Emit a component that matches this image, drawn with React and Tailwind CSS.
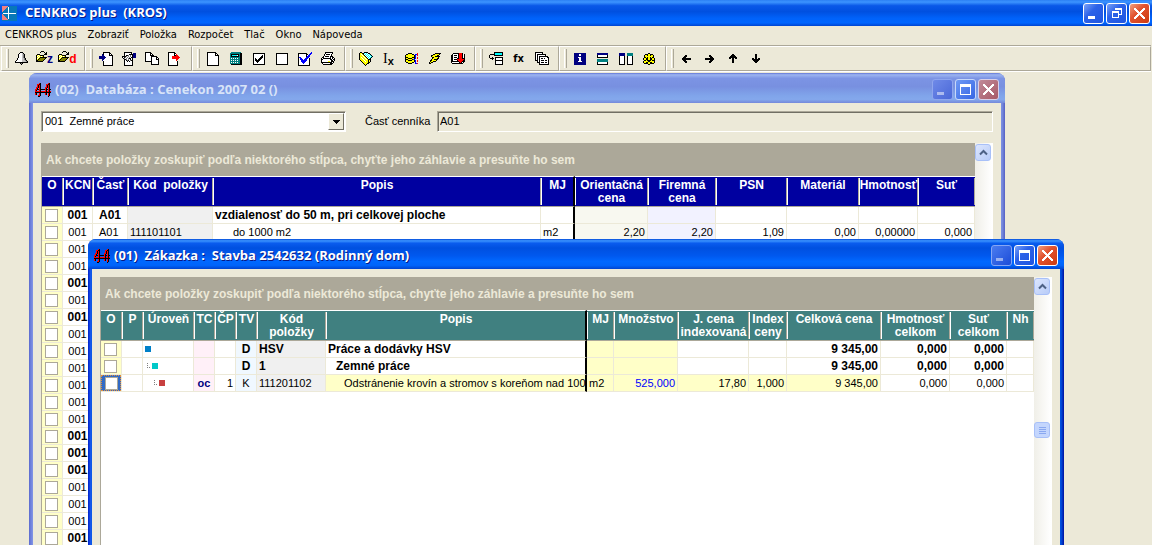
import React from 'react';

const PALETTE = {
  k: '#000000', w: '#ffffff', n: '#000080', b: '#0000ff', r: '#ff0000', d: '#a00000',
  g: '#808080', l: '#c0c0c0', t: '#008080', c: '#00ffff', y: '#ffff00', o: '#808000',
};

function Pixels({ rows, className = '' }) {
  const w = Math.max(...rows.map((r) => r.length));
  const rects = [];
  rows.forEach((row, y) => {
    let x = 0;
    while (x < row.length) {
      const ch = row[x];
      let end = x + 1;
      while (end < row.length && row[end] === ch) end += 1;
      if (PALETTE[ch]) rects.push(<rect key={`${x}-${y}`} x={x} y={y} width={end - x} height="1" fill={PALETTE[ch]} />);
      x = end;
    }
  });
  return (
    <svg width={w} height={rows.length} viewBox={`0 0 ${w} ${rows.length}`} shapeRendering="crispEdges" aria-hidden="true" className={`shrink-0 ${className}`}>
      {rects}
    </svg>
  );
}

const ART = {
  bell: [
    '.....kkk.....', '....kwwlk....', '...kwwwlgk...', '...kwwwlgk...', '...kwwwlgk...', '...kwwwlgk...', '..kwwwwllgk..',
    '..kwwwwllgk..', '.kwwwwwlllgk.', 'kwwwwwwllllgk', 'kkkkkkkkkkkkk', '.....kgk.....', '......k......',
  ],
  folder: [
    '.....kkk...', '....k...k.k', '.........kk', '.kkk....kkk', 'kywykkkk...', 'kwywywyk...', 'kywykkkkkkk', 'kwykoooook.', 'kykoooook..', 'kkoooook...', 'kkkkkkk....',
  ],
  docIn: [
    '....kkkkkkk...', '....kwwwwwkk..', '...nkwwwwwkwk.', '...nnwwwwwkkkk', 'nnnnnnwwwwwwwk', 'nnnnnnnwwwwwwk', 'nnnnnnwwwwwwwk', '...nnwwwwwwwwk', '...nwwwwwwwwwk', '....kwwwwwwwwk', '....kwwwwwwwwk', '....kwwwwwwwwk', '....kwwwwwwwwk', '....kkkkkkkkkk',
  ],
  docHand: [
    '..kkkkkkkk....', '..kwwwwwwk.nnn', '..kwwwwkkkknnn', '..kwkkgwgwknnn', 'kkkkgwgwgwknnn', 'kwkgwgwgwkknnn', '.kgwgwgkkwk...', '..kkgwgwkwk...', '..kwkgkwgkk...', '..kwwkwkwwk...', '..kwwwwwwwk...', '..kwwwwwwwk...', '..kwwwwwwwk...', '..kkkkkkkkk...',
  ],
  copy: [
    'kkkkkk........', 'kwwwwkk.......', 'kwwwwkwk......', 'kwwwwkkkk.....', 'kwwwwwkkkkkk..', 'kwwwwwkwwwwkk.', 'kwwwwwkwwwwkwk', 'kwwwwwkwwwwkkk', 'kwwwwwkwwwwwwk', 'kkkkkkkwwwwwwk', '......kwwwwwwk', '......kwwwwwwk', '......kkkkkkkk',
  ],
  docOut: [
    'kkkkkkk......', 'kwwwwwkk.....', 'kwwwwwkwr....', 'kwwwwwkkrr...', 'kwwwrrrrrrr..', 'kwwwrrrrrrrr.', 'kwwwrrrrrrr..', 'kwwwwwwwrr...', 'kwwwwwwwr....', 'kwwwwwwwwk...', 'kwwwwwwwwk...', 'kwwwwwwwwk...', 'kwwwwwwwwk...', 'kkkkkkkkkk...',
  ],
  page: [
    'kkkkkkkkk...', 'kwwwwwwwkk..', 'kwwwwwwwkwk.', 'kwwwwwwwkkkk', 'kwwwwwwwwwwk', 'kwwwwwwwwwwk', 'kwwwwwwwwwwk', 'kwwwwwwwwwwk', 'kwwwwwwwwwwk', 'kwwwwwwwwwwk', 'kwwwwwwwwwwk', 'kwwwwwwwwwwk', 'kwwwwwwwwwwk', 'kkkkkkkkkkkk',
  ],
  calc: [
    '.tttttttttt.', 'ttttttttttkk', 'tkkkkkkkktkk', 'tkcccccwktkk', 'tkkkkkkkktkk', 'ttttttttttkk', 'twtwtwtwttkk', 'ttttttttttkk', 'twtwtwtwttkk', 'ttttttttttkk', 'twtwtwtwttkk', 'ttttttttttkk', '.kkkkkkkkkkk',
  ],
  checked: [
    'kkkkkkkkkkkk', 'kwwwwwwwwwwk', 'kwwwwwwwwkwk', 'kwwwwwwwkkwk', 'kwwwwwwkkkwk', 'kwkwwwkkkwwk', 'kwkkwkkkwwwk', 'kwkkkkkwwwwk', 'kwwkkkwwwwwk', 'kwwwkwwwwwwk', 'kwwwwwwwwwwk', 'kkkkkkkkkkkk',
  ],
  unchecked: [
    'kkkkkkkkkkkk', 'kwwwwwwwwwwk', 'kwwwwwwwwwwk', 'kwwwwwwwwwwk', 'kwwwwwwwwwwk', 'kwwwwwwwwwwk', 'kwwwwwwwwwwk', 'kwwwwwwwwwwk', 'kwwwwwwwwwwk', 'kwwwwwwwwwwk', 'kwwwwwwwwwwk', 'kkkkkkkkkkkk',
  ],
  docCheck: [
    '.............b', 'kkkkkkkkk...bb', 'kwwwwwwwkk.bb.', 'kwwwwwwwkwbb..', 'kwwwwwwwkbbb..', 'kbbwwwwwbbb...', 'kwbbwwwbbbwk..', 'kwbbbwbbbwwk..', 'kwwbbbbbbwwk..', 'kwwbbbbbwwwk..', 'kwwwbbbwwwwk..', 'kwwwwbwwwwwk..', 'kwwwwwwwwwwk..', 'kkkkkkkkkkkk..',
  ],
  printer: [
    '....kkkkkkkk..', '....kwwwwwwk..', '...kwkkkkwk...', '...kwwwwwwk...', '..kwkkkkwkkk..', '.kkwwwwwwkwkk.', 'kwkkkkkkkkwkwk', 'kkwwwwwwwkkwkk', 'kwwwwwwwwwkkwk', 'kwwwwwwyywkkk.', 'kkkkkkkkkkkwk.', '.kwwwwwwwkkk..', '..kkkkkkkkk...',
  ],
  book: [
    '.kk..kkkk.....', 'kyykkcwcwkk...', 'kywykwcwcwck..', 'kyywykwcwcwck.', 'kyyywykwcwcwck', 'kywyywykwcwck.', 'kyywyywykwck..', 'kyyywyywykkk..', '.kyyywyyykyk..', '..kyyywyykyk..', '...kyyyyykk...', '....kyyykk....', '.....kyk......', '......k.......',
  ],
  coins: [
    '...kkkk.....r.', '.kkyyyykk.bbr.', 'kyyyyyyyykb.r.', 'kyyyyyyyykb...', 'kkkyyyykkkb.r.', 'kyykkkkyykb.r.', 'kkkyyyykbb....', 'kyykkkkyykb.r.', 'kyyyyyyyykb.r.', '.kkyyyykk.b...', '...kkkk...bbr.',
  ],
  bolt: [
    '......kkkkkk', '....kkyyyyk.', '..kkyyyykk..', '..kyyykkkkk.', '...kkyyyyk..', '...kyyyykk..', '..kyykkkk...', '.kkyyyyk....', '.kyykkk.....', 'kykk........', 'kk..........',
  ],
  ledger: [
    '..kkkkkkrrrk..', '.kwwwwwkrrrkwk', 'kkwkkkwkrrrkwk', 'kkwwwwwkrrrkwk', 'kkwkkkwkrrrkwk', 'kkwwwwkkrrrkkk', 'kkwkkkrrrrrrrk', 'kkwwwwkrrrrrkk', 'kkkkkkkkrrrkkk', 'kwwwwwwwkrkwk.', '.kkkkkkkkkkk..',
  ],
  insert: [
    '.....kkkkkkkkk', '.....kccccccck', '.kkkkkccccccck', 'k....kkkkkkkkk', 'k.............', 'k..k..kkkkkkkk', '.kkkk.kwwwwwwk', '...k..kwwwwwwk', '......kkkkkkkk', '......kwwwwwwk', '......kwwwwwwk', '......kwwwwwwk', '......kkkkkkkk',
  ],
  stack: [
    'kkkkkkkk......', 'kwwwwwwk......', 'kwkkkkkkkkk...', 'kwkwwwwwwwk...', 'kwkwkkkkkkkkk.', 'kwkwkwwwwwwwkk', 'kwkwkwkkwkwwwk', 'kwkwkwwwwwwwwk', 'kkkwkwkkkwkkwk', '..kwkwwwwwwwwk', '..kkkwkkkwkkwk', '....kwwwwwwwwk', '....kkkkkkkkkk',
  ],
  info: [
    'nnnnnnnnnnnn', 'nnnnnwwnnnnn', 'nnnnnwwnnnnn', 'nnnnnnnnnnnn', 'nnnnwwwnnnnn', 'nnnnnwwnnnnn', 'nnnnnwwnnnnn', 'nnnnnwwnnnnn', 'nnnnwwwwnnnn', 'nnnnnnnnnnnn', 'nnnnnnnnnnnn', 'nnnnnnnnnnnn',
  ],
  rowsSplit: [
    'nnnnnnnnnnn', 'nnnnnnnnnnn', 'kwwwwwwwwwk', 'kwwwwwwwwwk', 'kkkkkkkkkkk', '...........', 'ttttttttttt', 'ttttttttttt', 'ttttttttttt', 'kwwwwwwwwwk', 'kwwwwwwwwwk', 'kkkkkkkkkkk',
  ],
  colsSplit: [
    'nnnnnn..tttttt', 'nnnnnn..tttttt', 'nnnnnn..tttttt', 'kwwwwk..kwwwwk', 'kwwwwk..kwwwwk', 'kwwwwk..kwwwwk', 'kwwwwk..kwwwwk', 'kwwwwk..kwwwwk', 'kwwwwk..kwwwwk', 'kwwwwk..kwwwwk', 'kwwwwk..kwwwwk', 'kkkkkk..kkkkkk',
  ],
  gear: [
    '.....kk.....', '..kkkyykkk..', '.kyykyykyyk.', '.kyyyyyyyyk.', '.kkykyykykk.', 'kyykkyykkyyk', 'kyykkyykkyyk', '.kkykkkkykkk', 'kyyyykkyyyyk', 'kyykkyykkyyk', '.kkkkyykkkk.', '.....kk.....',
  ],
  left: ['...kk....', '..kkk....', '.kkk.....', 'kkkkkkkkk', 'kkkkkkkkk', '.kkk.....', '..kkk....', '...kk....'],
  right: ['....kk...', '....kkk..', '.....kkk.', 'kkkkkkkkk', 'kkkkkkkkk', '.....kkk.', '....kkk..', '....kk...'],
  up: ['...kk...', '..kkkk..', '.kkkkkk.', 'kkkkkkkk', 'kk.kk.kk', '...kk...', '...kk...', '...kk...', '...kk...'],
  down: ['...kk...', '...kk...', '...kk...', '...kk...', 'kk.kk.kk', 'kkkkkkkk', '.kkkkkk.', '..kkkk..', '...kk...'],
  tower: [
    '....rk.......rk.', '..rrkk.....rrkk.', '..rkrk.....rkrk.', '..rkrk.....rkrk.', '.rrkrk....rrkrk.', '.rk.rk....rk.rk.', 'rrkkrkkkkkrkkrkk', 'rk..rk....rk.rk.', 'rrrrrkrrrrrkrrkr', 'kkkkkkkkkkkkkkkk', 'rk..rk....rk.rk.', 'rk..rk....rk.rk.', '...rrk.......rk.', '...kk........k..',
  ],
  minus: ['wwwwwww', 'wwwwwww', 'wwwwwww'],
  maximize: ['wwwwwwwwwww', 'wwwwwwwwwww', 'wwwwwwwwwww', 'w.........w', 'w.........w', 'w.........w', 'w.........w', 'w.........w', 'w.........w', 'w.........w', 'wwwwwwwwwww'],
  restore: ['...wwwwwww', '...wwwwwww', '.........w', 'wwwwwww..w', 'wwwwwww..w', 'w.....w..w', 'w.....wwww', 'w.....w...', 'w.....w...', 'wwwwwww...'],
  close: ['ww.......ww', 'www.....www', '.www...www.', '..www.www..', '...wwwww...', '....www....', '...wwwww...', '..www.www..', '.www...www.', 'www.....www', 'ww.......ww'],
};

const TOOL_GROUPS = [
  [['bell', 'Upozornenia'], ['folder', 'Otvoriť zákazku', 'z'], ['folder', 'Otvoriť databázu', 'd']],
  [['docIn', 'Vložiť'], ['docHand', 'Vlastnosti'], ['copy', 'Kopírovať'], ['docOut', 'Vybrať']],
  [['page', 'Nový'], ['calc', 'Kalkulačka'], ['checked', 'Označiť'], ['unchecked', 'Odznačiť'], ['docCheck', 'Kontrola'], ['printer', 'Tlač']],
  [['book', 'Cenník'], ['Ix', 'Index'], ['coins', 'Ceny'], ['bolt', 'Prepočet'], ['ledger', 'Uložiť']],
  [['insert', 'Vložiť riadok'], ['fx', 'Výraz'], ['stack', 'Zoznam']],
  [['info', 'Informácie'], ['rowsSplit', 'Pod seba'], ['colsSplit', 'Vedľa seba'], ['gear', 'Nastavenia']],
  [['left', 'Vľavo'], ['right', 'Vpravo'], ['up', 'Hore'], ['down', 'Dole']],
];

function ToolFace({ art, letter }) {
  if (art === 'Ix') {
    return (
      <span className="flex items-end leading-3">
        <span className="font-['Liberation_Serif',serif] text-[14px]">I</span>
        <span className="-mb-0.5 text-[11px] font-bold">x</span>
      </span>
    );
  }
  if (art === 'fx') return <span className="font-['DejaVu_Sans_Condensed','DejaVu_Sans',sans-serif] text-[11px] leading-4 font-bold">fx</span>;
  if (letter) {
    return (
      <>
        <Pixels rows={ART[art]} className="-mt-1" />
        <span className={`text-[12px] leading-4 font-bold ${letter === 'z' ? 'text-[#000080]' : 'text-[#ff0000]'}`}>{letter}</span>
      </>
    );
  }
  return <Pixels rows={ART[art]} />;
}

function CaptionButton({ kind, label, tone = 'blue' }) {
  const tones = {
    blue: 'border-white bg-[linear-gradient(135deg,#7aa2f8_0%,#2c62e8_40%,#1f55e0_100%)]',
    red: 'border-white bg-[linear-gradient(135deg,#f0a080_0%,#e25430_40%,#cc3a10_100%)]',
    dimBlue: 'border-[#8fa6ee] bg-[linear-gradient(135deg,#6f8ae8_0%,#4a68d8_100%)]',
    softBlue: 'border-[#c8d8fa] bg-[linear-gradient(135deg,#6f9af5_0%,#3565e4_100%)]',
    softRed: 'border-[#d8d0e8] bg-[linear-gradient(135deg,#c08a98_0%,#a85a68_100%)]',
    deadBlue: 'border-[#86a6f4] bg-[linear-gradient(135deg,#4a7cf0_0%,#1c4cd8_100%)]',
  };
  const dim = tone === 'dimBlue' || tone === 'deadBlue';
  return (
    <button type="button" aria-label={label} className={`flex size-[21px] shrink-0 rounded-[3px] border ${tones[tone]} ${kind === 'minus' ? 'items-end pb-1 pl-1' : 'items-center justify-center'}`}>
      <Pixels rows={ART[kind]} className={dim ? 'opacity-50' : ''} />
    </button>
  );
}

const TITLE_FONT = "font-['Open_Sans','Noto_Sans',sans-serif] font-bold text-[13px] whitespace-pre";

function ScrollBar({ thumb }) {
  return (
    <div className="flex w-[17px] shrink-0 flex-col bg-[linear-gradient(90deg,#f0efe8,#ffffff)] pt-px">
      <button type="button" aria-label="Posunúť hore" className="flex h-[17px] w-[16px] items-center justify-center rounded-[3px] border border-[#a8c0f8] bg-[linear-gradient(135deg,#dce6fe,#b8ccf8)]">
        <svg width="9" height="7" viewBox="0 0 9 7" aria-hidden="true"><path d="M1 5.5 4.5 2 8 5.5" fill="none" stroke="#4d6185" strokeWidth="2" /></svg>
      </button>
      {thumb && (
        <div className="mt-[127px] flex h-[16px] w-[16px] flex-col items-center justify-center gap-px rounded-[3px] border border-[#a8c0f8] bg-[#c4d6fd]">
          <span className="h-px w-[7px] bg-[#8aa8f0]" /><span className="h-px w-[7px] bg-[#8aa8f0]" /><span className="h-px w-[7px] bg-[#8aa8f0]" /><span className="h-px w-[7px] bg-[#8aa8f0]" />
        </div>
      )}
    </div>
  );
}

function Grid({ columns, rows, headTone, thumb, height }) {
  return (
    <div className={`flex border-r border-l border-r-white border-l-[#aca899] bg-white ${height}`}>
      <div className="min-w-0 flex-1">
        <p className="flex h-[33px] items-center bg-[#aca899] pl-1 text-[12px] font-bold whitespace-nowrap text-[#ece9d8]">
          Ak chcete položky zoskupiť podľa niektorého stĺpca, chyťte jeho záhlavie a presuňte ho sem
        </p>
        <table className="w-full table-fixed border-separate border-spacing-0">
          <colgroup>{columns.map((c) => <col key={c.key} className={c.width} />)}</colgroup>
          <thead>
            <tr>
              {columns.map((c, i) => (
                <th key={c.key} scope="col" className={`h-[31px] overflow-hidden border-t border-b border-t-white border-b-[#aca899] p-0 align-top font-bold text-white ${headTone} ${c.edge ? 'border-r-2 border-r-black' : ''}`}>
                  <div className={`mt-px flex h-[27px] justify-center pt-px text-[12px] leading-[13px] whitespace-pre ${i ? 'border-l border-l-white' : ''} ${c.edge ? '' : 'border-r border-r-[#aca899]'}`}>{c.title}</div>
                </th>
              ))}
            </tr>
          </thead>
          <tbody>
            {rows.map((row, r) => (
              <tr key={r} className={row.bold ? 'text-[12px] font-bold' : ''}>
                {columns.map((c) => (
                  <td key={c.key} className={`h-[17px] overflow-hidden border-b border-b-[#ece9d8] p-0 leading-4 whitespace-pre ${c.edge ? 'border-r-2 border-r-black' : 'border-r border-r-[#ece9d8]'} ${(row.tones && row.tones[c.key]) || c.tone || 'bg-white'} ${c.align || 'pl-0.5'}`}>
                    {c.key === 'o' ? (
                      <div className={`flex h-4 items-center pl-[3px] ${row.focused ? 'border border-dotted border-[#e09040] bg-[#316ac5] pl-0.5' : ''}`}>
                        <input type="checkbox" aria-label={`Označiť riadok ${r + 1}`} className="size-[13px] appearance-none border border-[#aca899] bg-white" />
                      </div>
                    ) : row[c.key]}
                  </td>
                ))}
              </tr>
            ))}
          </tbody>
        </table>
      </div>
      <ScrollBar thumb={thumb} />
    </div>
  );
}

const CENTER = 'text-center';
const RIGHT = 'text-right pr-0.5';

const DB_COLUMNS = [
  { key: 'o', title: 'O', width: 'w-[21px]', tone: 'bg-[#ffffc8]', align: 'text-left' },
  { key: 'kcn', title: 'KCN', width: 'w-[30px]', align: CENTER },
  { key: 'cast', title: 'Časť', width: 'w-[35px]', align: 'pl-[6px]' },
  { key: 'kod', title: 'Kód  položky', width: 'w-[85px]', tone: 'bg-[#f0f0f0]' },
  { key: 'popis', title: 'Popis', width: 'w-auto' },
  { key: 'mj', title: 'MJ', width: 'w-[34px]', edge: true },
  { key: 'orient', title: 'Orientačná\ncena', width: 'w-[73px]', tone: 'bg-[#f8f8f0]', align: RIGHT },
  { key: 'firm', title: 'Firemná\ncena', width: 'w-[68px]', tone: 'bg-[#f2f2ff]', align: RIGHT },
  { key: 'psn', title: 'PSN', width: 'w-[71px]', align: RIGHT },
  { key: 'mat', title: 'Materiál', width: 'w-[72px]', align: RIGHT },
  { key: 'hmot', title: 'Hmotnosť', width: 'w-[59px]', align: RIGHT },
  { key: 'sut', title: 'Suť', width: 'w-[57px]', align: RIGHT },
];

const DB_ROWS = [
  { kcn: '001', cast: 'A01', popis: 'vzdialenosť do 50 m, pri celkovej ploche', bold: true },
  { kcn: '001', cast: 'A01', kod: '111101101', popis: <span className="pl-[18px]">do 1000 m2</span>, mj: 'm2', orient: '2,20', firm: '2,20', psn: '1,09', mat: '0,00', hmot: '0,00000', sut: '0,000' },
  ...[0, 0, 1, 0, 1, 0, 0, 0, 0, 0, 0, 1, 1, 1, 0, 0, 0, 1].map((bold) => ({ kcn: '001', bold: Boolean(bold) })),
];

const JOB_COLUMNS = [
  { key: 'o', title: 'O', width: 'w-[21px]', tone: 'bg-[#ffffc8]', align: 'text-left' },
  { key: 'p', title: 'P', width: 'w-[21px]' },
  { key: 'level', title: 'Úroveň', width: 'w-[51px]' },
  { key: 'tc', title: 'TC', width: 'w-[21px]', tone: 'bg-[#fff0f8]', align: CENTER },
  { key: 'cp', title: 'ČP', width: 'w-[21px]', align: RIGHT },
  { key: 'tv', title: 'TV', width: 'w-[21px]', tone: 'bg-[#f0f8ff]', align: CENTER },
  { key: 'kod', title: 'Kód\npoložky', width: 'w-[69px]', tone: 'bg-[#f0f0f0]' },
  { key: 'popis', title: 'Popis', width: 'w-auto', edge: true },
  { key: 'mj', title: 'MJ', width: 'w-[27px]', tone: 'bg-[#ffffc8]' },
  { key: 'mnoz', title: 'Množstvo', width: 'w-[64px]', tone: 'bg-[#ffffc8]', align: 'text-right pr-0.5 text-[#0000ff]' },
  { key: 'jcena', title: 'J. cena\nindexovaná', width: 'w-[71px]', align: RIGHT },
  { key: 'index', title: 'Index\nceny', width: 'w-[38px]', align: RIGHT },
  { key: 'celk', title: 'Celková cena', width: 'w-[94px]', align: RIGHT },
  { key: 'hmot', title: 'Hmotnosť\ncelkom', width: 'w-[69px]', align: RIGHT },
  { key: 'sut', title: 'Suť\ncelkom', width: 'w-[57px]', align: RIGHT },
  { key: 'nh', title: 'Nh', width: 'w-[27px]' },
];

function Level({ depth }) {
  const fill = ['bg-[#0080c8]', 'bg-[#00c8c8]', 'bg-[#c84040]'][depth];
  const indent = ['pl-0', 'pl-[2px]', 'pl-[9px]'][depth];
  return (
    <span className={`flex h-4 items-center gap-0.5 ${indent}`}>
      {depth > 0 && <Pixels rows={['g..', '...', 'g..', '...', 'g.g']} className="-mt-0.5" />}
      <span className={`size-[6px] ${fill}`} />
    </span>
  );
}

const YELLOW = 'bg-[#ffffc8]';
const JOB_ROWS = [
  { level: <Level depth={0} />, tv: 'D', kod: 'HSV', popis: 'Práce a dodávky HSV', celk: '9 345,00', hmot: '0,000', sut: '0,000', bold: true },
  { level: <Level depth={1} />, tv: 'D', kod: '1', popis: <span className="pl-2">Zemné práce</span>, celk: '9 345,00', hmot: '0,000', sut: '0,000', bold: true },
  {
    focused: true, level: <Level depth={2} />, tc: <b className="text-[#000080]">oc</b>, cp: '1', tv: 'K', kod: '111201102',
    popis: <span className="pl-4">Odstránenie krovín a stromov s koreňom nad 1000</span>,
    mj: 'm2', mnoz: '525,000', jcena: '17,80', index: '1,000', celk: '9 345,00', hmot: '0,000', sut: '0,000',
    tones: { popis: YELLOW, jcena: YELLOW, index: YELLOW, celk: YELLOW },
  },
];

function ChildWindow({ title, active, place, children }) {
  return (
    <section className={`absolute bottom-0 flex flex-col overflow-hidden rounded-t-lg ${place} ${active ? 'bg-[linear-gradient(90deg,#0024c8_0,#0831d9_1px,#1a62f0_3px,#0050e0_4px,#0050e0_calc(100%-3px),#0012a0_100%)]' : 'bg-[linear-gradient(90deg,#5a68cc_0,#6678d8_1px,#8496e6_4px,#7a8ee0_calc(100%-3px),#5560c4_100%)]'}`}>
      <header className={`flex h-[30px] shrink-0 items-center pt-[3px] pr-[6px] pl-[6px] ${active ? 'bg-[linear-gradient(#0048d8_0%,#3c94ff_6%,#0a5cee_14%,#0050e0_30%,#0058ee_55%,#0068ff_75%,#0064fa_88%,#0044d0_100%)]' : 'bg-[linear-gradient(#6074d4_0%,#9cb4f0_6%,#7c94e4_18%,#7890e0_45%,#80a4ea_75%,#84a8ec_88%,#7488da_100%)]'}`}>
        <Pixels rows={ART.tower} />
        <h2 className={`min-w-0 flex-1 overflow-hidden pl-1 ${TITLE_FONT} ${active ? 'text-white [text-shadow:1px_1px_#0a1883]' : 'text-[#d8e4f8]'}`}>{title}</h2>
        <div className="flex gap-0.5">
          <CaptionButton kind="minus" label="Minimalizovať" tone={active ? 'deadBlue' : 'dimBlue'} />
          <CaptionButton kind="maximize" label="Maximalizovať" tone={active ? 'blue' : 'softBlue'} />
          <CaptionButton kind="close" label="Zavrieť" tone={active ? 'red' : 'softRed'} />
        </div>
      </header>
      <div className="mx-1 min-h-0 flex-1 overflow-hidden bg-[#ece9d8] px-2 pt-2">{children}</div>
    </section>
  );
}

const SUNKEN = 'border border-t-[#aca899] border-l-[#aca899] border-r-white border-b-white [box-shadow:inset_1px_1px_#716f64]';

export default function App() {
  return (
    <div className="flex h-screen flex-col overflow-hidden bg-[#ece9d8] font-['Liberation_Sans',Arial,sans-serif] text-[11px] text-black">
      <header className="flex h-[26px] shrink-0 items-center bg-[linear-gradient(#2c80f4_0%,#3c94ff_8%,#0a58e8_22%,#0050e0_45%,#0062fa_70%,#0066ff_88%,#0044d0_100%)] pr-0.5 pl-0.5">
        <svg width="15" height="15" viewBox="0 0 15 15" aria-hidden="true" shapeRendering="crispEdges" className="shrink-0">
          <rect width="15" height="15" fill="#0878b8" />
          <path d="M0 0h6L0 6zM0 8l6 6H0z" fill="#f08080" />
          <path d="M6 1h1v12H6zM1 7h13v1H1z" fill="#fff" />
        </svg>
        <h1 className={`flex-1 pl-2 ${TITLE_FONT} text-white [text-shadow:1px_1px_#0a1883]`}>{'CENKROS plus  (KROS)'}</h1>
        <div className="flex gap-0.5">
          <CaptionButton kind="minus" label="Minimalizovať" />
          <CaptionButton kind="restore" label="Obnoviť" />
          <CaptionButton kind="close" label="Zavrieť" tone="red" />
        </div>
      </header>

      <nav className="flex h-[19px] shrink-0 items-center gap-[11px] pl-[5px] font-['DejaVu_Sans_Condensed','DejaVu_Sans',sans-serif] text-[11px]">
        {['CENKROS plus', 'Zobraziť', 'Položka', 'Rozpočet', 'Tlač', 'Okno', 'Nápoveda'].map((item) => (
          <button key={item} type="button" className="whitespace-nowrap">{item}</button>
        ))}
      </nav>

      <div role="toolbar" aria-label="Nástroje" className="mr-px flex h-[27px] shrink-0 border-t border-b border-t-[#aca899] border-b-white pl-px">
        {TOOL_GROUPS.map((group, g) => (
          <div key={g} className={`flex border-t border-r border-b border-l border-t-white border-r-[#aca899] border-b-[#aca899] border-l-white pr-[5px] pl-1 ${g === TOOL_GROUPS.length - 1 ? 'flex-1' : ''}`}>
            <span className="my-0.5 mr-px w-[3px] border-r border-l border-r-[#aca899] border-l-white" />
            {group.map(([art, label, letter]) => (
              <button key={label} type="button" aria-label={label} className="flex w-[23px] items-center justify-center">
                <ToolFace art={art} letter={letter} />
              </button>
            ))}
          </div>
        ))}
      </div>

      <main className="relative min-h-0 flex-1 overflow-hidden">
        <ChildWindow title="(02)  Databáza : Cenekon 2007 02 ()" place="top-px left-[29px] right-[147px]">
          <div className="mb-[11px] flex h-[21px] items-center">
            <div className={`relative h-[21px] w-[305px] shrink-0 bg-white ${SUNKEN}`}>
              <select aria-label="Cenník" className="size-full appearance-none pl-[3px] whitespace-pre outline-none">
                <option>{'001 \u00a0Zemné práce'}</option>
              </select>
              <span className="pointer-events-none absolute top-px right-px flex h-[17px] w-4 items-center justify-center border border-t-white border-l-white border-r-[#716f64] border-b-[#716f64] bg-[#ece9d8]">
                <Pixels rows={['kkkkkkk', '.kkkkk.', '..kkk..', '...k...']} />
              </span>
            </div>
            <label htmlFor="cast-cennika" className="w-[91px] shrink-0 pl-[19px] whitespace-nowrap">Časť cenníka</label>
            <input id="cast-cennika" readOnly value="A01" className={`h-[21px] min-w-0 flex-1 bg-[#ece9d8] pb-0.5 pl-0.5 outline-none ${SUNKEN}`} />
          </div>
          <Grid columns={DB_COLUMNS} rows={DB_ROWS} headTone="bg-[#0000a0]" height="h-full" />
        </ChildWindow>

        <ChildWindow active title="(01)  Zákazka :  Stavba 2542632 (Rodinný dom)" place="top-[167px] left-[88px] right-[88px]">
          <Grid columns={JOB_COLUMNS} rows={JOB_ROWS} headTone="bg-[#408080]" height="h-full" thumb />
        </ChildWindow>
      </main>
    </div>
  );
}
